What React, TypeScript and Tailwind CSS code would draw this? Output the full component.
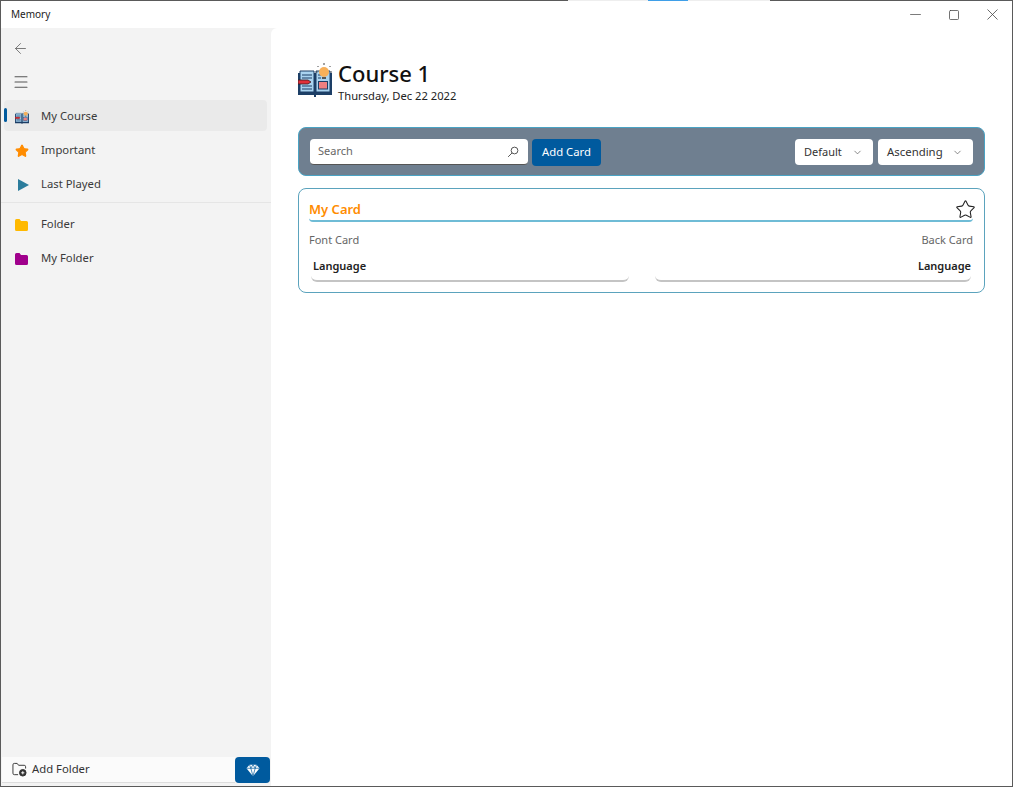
import { ArrowLeft, Menu, Star, ChevronDown, Minus, Square, X } from "lucide-react";

const font = { fontFamily: '"Noto Sans", sans-serif' };

const BookIcon = ({ className }: { className?: string }) => (
  <svg viewBox="0 0 34 34" className={className}>
    <path d="M0 10h34v22H18v2h-2v-2H0z" fill="#1d3f66" />
    <path d="M2 8h14v21H2zM18 8h14v21H18z" fill="#a9d3f0" stroke="#1d3f66" strokeWidth="1" />
    <path d="M4 12h10M4 15h10M4 23h10M4 26h10M20 12h3M20 15h3" stroke="#1d3f66" strokeWidth="1.200" />
    <path d="M0 17h10l3 2-3 2H0z" fill="#e0303a" stroke="#3c1a20" strokeWidth="0.800" />
    <rect x="20.500" y="18.500" width="9" height="7.500" fill="#f08080" stroke="#1d3f66" strokeWidth="1" />
    <circle cx="26" cy="9" r="5" fill="#f7b05a" />
    <path d="M24 14h4v2h-4z" fill="#555" />
    <path d="M26 0v2M19.500 3l1 1M32.500 3l-1 1M18 9h1.500M32.500 9H34" stroke="#444" strokeWidth="1" />
  </svg>
);

const FolderIcon = ({ color }: { color: string }) => (
  <svg viewBox="0 0 13 12" className="w-[13px] h-[12px]">
    <path d="M0 1.500A1.500 1.500 0 0 1 1.500 0h3l1.500 2h5.500A1.500 1.500 0 0 1 13 3.500v7a1.500 1.500 0 0 1-1.500 1.500h-10A1.500 1.500 0 0 1 0 10.500z" fill={color} />
  </svg>
);

const NavItem = ({ icon, label, active, low }: { icon: React.ReactNode; label: string; active?: boolean; low?: boolean }) => (
  <div className={`relative ml-[3px] mr-[4px] h-[31px] rounded flex items-center mb-[3px] ${low ? "pt-[2px]" : ""} ${active ? "bg-[#eaeaea]" : ""}`}>
    {active && <div className="absolute left-0 top-[8px] w-[2.500px] h-[14px] rounded bg-[#005a9e]" />}
    <div className="w-[37px] flex justify-center pr-[2px]">{icon}</div>
    <span className="text-[11.300px] text-[#3a3a3a]">{label}</span>
  </div>
);

const Dropdown = ({ label, w, text }: { label: string; w: string; text: string }) => (
  <div className={`${w} h-[26px] bg-white rounded flex items-center justify-between pl-[9px] pr-[10px] ${text} text-[#333]`}>
    {label}
    <ChevronDown className="w-[11px] h-[11px] text-[#555]" strokeWidth={1.5} />
  </div>
);

const App = () => {
  return (
    <div style={font} className="w-[1013px] h-[787px] flex flex-col bg-white overflow-hidden border-l border-b border-r border-[#5a5a5a]">
      <div className="flex h-px shrink-0 -mx-px">
        <div className="w-[568px] bg-[#5a5a5a]" />
        <div className="w-[80px] bg-[#eeeeee]" />
        <div className="w-[40px] bg-[#3f9fe8]" />
        <div className="w-[82px] bg-[#eeeeee]" />
        <div className="flex-1 bg-[#5a5a5a]" />
      </div>

      <div className="h-[27px] shrink-0 flex items-center justify-between pl-[10px]">
        <span className="text-[10px] text-[#222]">Memory</span>
        <div className="flex items-center text-[#444]">
          <div className="w-[39px] flex justify-center"><Minus className="w-[17px] h-[17px]" strokeWidth={1} /></div>
          <div className="w-[38px] flex justify-center"><Square className="w-[12px] h-[12px]" strokeWidth={1.500} /></div>
          <div className="w-[39px] flex justify-center"><X className="w-[19px] h-[19px]" strokeWidth={1} /></div>
        </div>
      </div>

      <div className="flex flex-1 min-h-0 bg-[#f3f3f3]">
        <aside className="w-[270px] shrink-0 flex flex-col">
          <div className="h-[38px] flex items-center pt-[3px] pl-[11px]">
            <ArrowLeft className="w-[17px] h-[17px] text-[#666]" strokeWidth={1.200} />
          </div>
          <div className="h-[32px] flex items-center pl-[11px] mb-[2px]">
            <Menu className="w-[18px] h-[18px] text-[#555]" strokeWidth={1.400} />
          </div>
          <NavItem active low label="My Course" icon={<BookIcon className="w-[14px] h-[14px]" />} />
          <NavItem low label="Important" icon={<Star className="w-[14px] h-[14px] text-[#ff8c00] fill-[#ff8c00]" />} />
          <NavItem low label="Last Played" icon={<div className="ml-[3px] w-0 h-0 border-y-[6px] border-y-transparent border-l-[11px] border-l-[#2b7c9c]" />} />
          <div className="h-px bg-[#e5e5e5] mb-[6px]" />
          <NavItem label="Folder" icon={<FolderIcon color="#ffb900" />} />
          <NavItem label="My Folder" icon={<FolderIcon color="#a0008c" />} />

          <div className="mt-auto flex items-stretch h-[26px] mb-[3px] ml-[1px] mr-[1px]">
            <div className="flex-1 flex items-center gap-[5px] pl-[10px] bg-[#fbfbfb] border-b border-[#dddddd]">
              <svg viewBox="0 0 16 16" className="w-[15px] h-[15px]" fill="none" stroke="#333" strokeWidth="1">
                <path d="M6.500 13.500H2.500a1.500 1.500 0 0 1-1.500-1.500V3a1.500 1.500 0 0 1 1.500-1.500h3l1.500 2h6a1.500 1.500 0 0 1 1.500 1.500v2" />
                <circle cx="11.500" cy="11.500" r="3.500" fill="#333" />
                <path d="M11.500 9.800v3.400M9.800 11.500h3.400" stroke="#fff" />
              </svg>
              <span className="text-[11.300px] text-[#333]">Add Folder</span>
            </div>
            <div className="w-[35px] bg-[#005a9e] rounded flex items-center justify-center">
              <svg viewBox="0 0 16 16" className="w-[14px] h-[14px]">
                <path d="M4 2h8l3.500 4L8 15 .5 6z" fill="#fff" />
                <path d="M.5 6h15M5.500 6 8 15l2.500-9M4 2l1.500 4L8 2l2.500 4L12 2" fill="none" stroke="#005a9e" strokeWidth="0.800" />
              </svg>
            </div>
          </div>
        </aside>

        <main className="flex-1 bg-white rounded-tl-md pl-[27px] pr-[27px]">
          <div className="flex items-start pt-[31px] h-[99px]">
            <BookIcon className="w-[34px] h-[34px] mt-[4px]" />
            <div className="ml-[6px]">
              <h1 className="text-[22px] leading-[28px] font-medium text-[#111]">Course 1</h1>
              <p className="mt-[1px] text-[11.200px] leading-[16px] text-[#222]">Thursday, Dec 22 2022</p>
            </div>
          </div>

          <div className="h-[49px] rounded-lg bg-[#6f7f90] border border-[#4aa3c4] flex items-center justify-between pl-[11px] pr-[11px] pt-[1px]">
            <div className="flex items-center gap-[4px]">
              <div className="w-[218px] h-[26px] bg-white rounded flex items-center justify-between pl-[8px] pr-[9px] border-b border-[#555]">
                <span className="text-[11px] text-[#666]">Search</span>
                <svg viewBox="0 0 16 16" className="w-[12px] h-[12px]" fill="none" stroke="#444" strokeWidth="1.200">
                  <circle cx="10" cy="6" r="4.500" />
                  <path d="M6.800 9.200 1.500 14.500" />
                </svg>
              </div>
              <div className="w-[69px] h-[27px] rounded bg-[#005a9e] flex items-center justify-center text-[11.300px] text-white">Add Card</div>
            </div>
            <div className="flex items-center gap-[5px]">
              <Dropdown label="Default" w="w-[78px]" text="text-[11px]" />
              <Dropdown label="Ascending" w="w-[95px]" text="text-[11.400px]" />
            </div>
          </div>

          <div className="mt-[12px] h-[105px] rounded-lg border border-[#5ba3bd] pl-[10px] pr-[11px] pt-[8px]">
            <div className="h-[25px] flex items-center justify-between border-b-2 border-[#6fbcd6] rounded-b-sm">
              <span className="text-[13px] font-semibold text-[#ff8c00] mt-[2px]">My Card</span>
              <Star className="w-[21px] h-[21px] text-[#222] -mr-[3px] mt-[2px]" strokeWidth={1.200} />
            </div>
            <div className="flex justify-between mt-[10px] text-[11px] leading-[16px] text-[#666]">
              <span>Font Card</span>
              <span>Back Card</span>
            </div>
            <div className="flex justify-between mt-[9px] gap-[26px] text-[11px] font-semibold text-[#222]">
              <div className="flex-1 ml-[2px] pl-[2px] pt-[1px] h-[25px] flex items-start border-b-2 border-[#c4c4c4] rounded-b-md">Language</div>
              <div className="flex-1 mr-[2px] pt-[1px] h-[25px] flex items-start justify-end border-b-2 border-[#c4c4c4] rounded-b-md">Language</div>
            </div>
          </div>
        </main>
      </div>
    </div>
  );
};

export default App;
